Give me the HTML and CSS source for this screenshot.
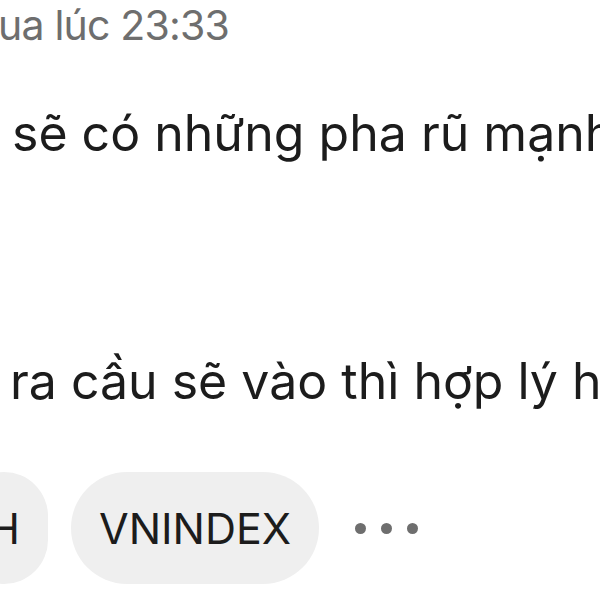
FILE: index.html
```html
<!DOCTYPE html>
<html lang="vi">

<head>
	<meta charset="UTF-8" />
	<title>Bài viết</title>
	<link rel="stylesheet" href="styles.css">
</head>

<body>
	<div class="post">
		<div class="post-meta">ua lúc 23:33</div>
		<p class="post-line first">sẽ có những pha rũ mạnh</p>
		<p class="post-line second">ra cầu sẽ vào thì hợp lý hơn</p>
		<div class="tag-row">
			<span class="tag tag-cut">H</span>
			<span class="tag">VNINDEX</span>
			<span class="more-dots">
				<i></i><i></i><i></i>
			</span>
		</div>
	</div>
</body>

</html>
```

FILE: styles.css
```css
body {
	margin: 0;
	background-color: #fff;
	font-family: Inter, "Noto Sans", sans-serif;
	overflow: hidden;
	width: 600px;
	height: 600px;
}

.post {
	white-space: nowrap;
}

.post-meta {
	color: #6e6e6e;
	font-size: 41px;
	line-height: 50px;
	letter-spacing: -0.8px;
	margin-left: -2px;
}

.post-line {
	color: #1c1c1c;
	font-size: 50px;
	line-height: 60px;
	margin: 0;
}

.post-line.first {
	margin-top: 53px;
	padding-left: 12px;
}

.post-line.second {
	margin-top: 188px;
	padding-left: 10px;
}

.tag-row {
	display: flex;
	align-items: center;
	gap: 23px;
	margin-top: 61px;
}

.tag {
	display: flex;
	align-items: center;
	height: 112px;
	padding: 0 28px;
	border-radius: 56px;
	background-color: #efefef;
	color: #1c1c1c;
	font-size: 43px;
	flex-shrink: 0;
}

.tag-cut {
	margin-left: -40px;
}

.more-dots {
	display: flex;
	gap: 15px;
	margin-left: 13px;
}

.more-dots i {
	width: 11px;
	height: 11px;
	border-radius: 50%;
	background-color: #6e6e6e;
}
```
